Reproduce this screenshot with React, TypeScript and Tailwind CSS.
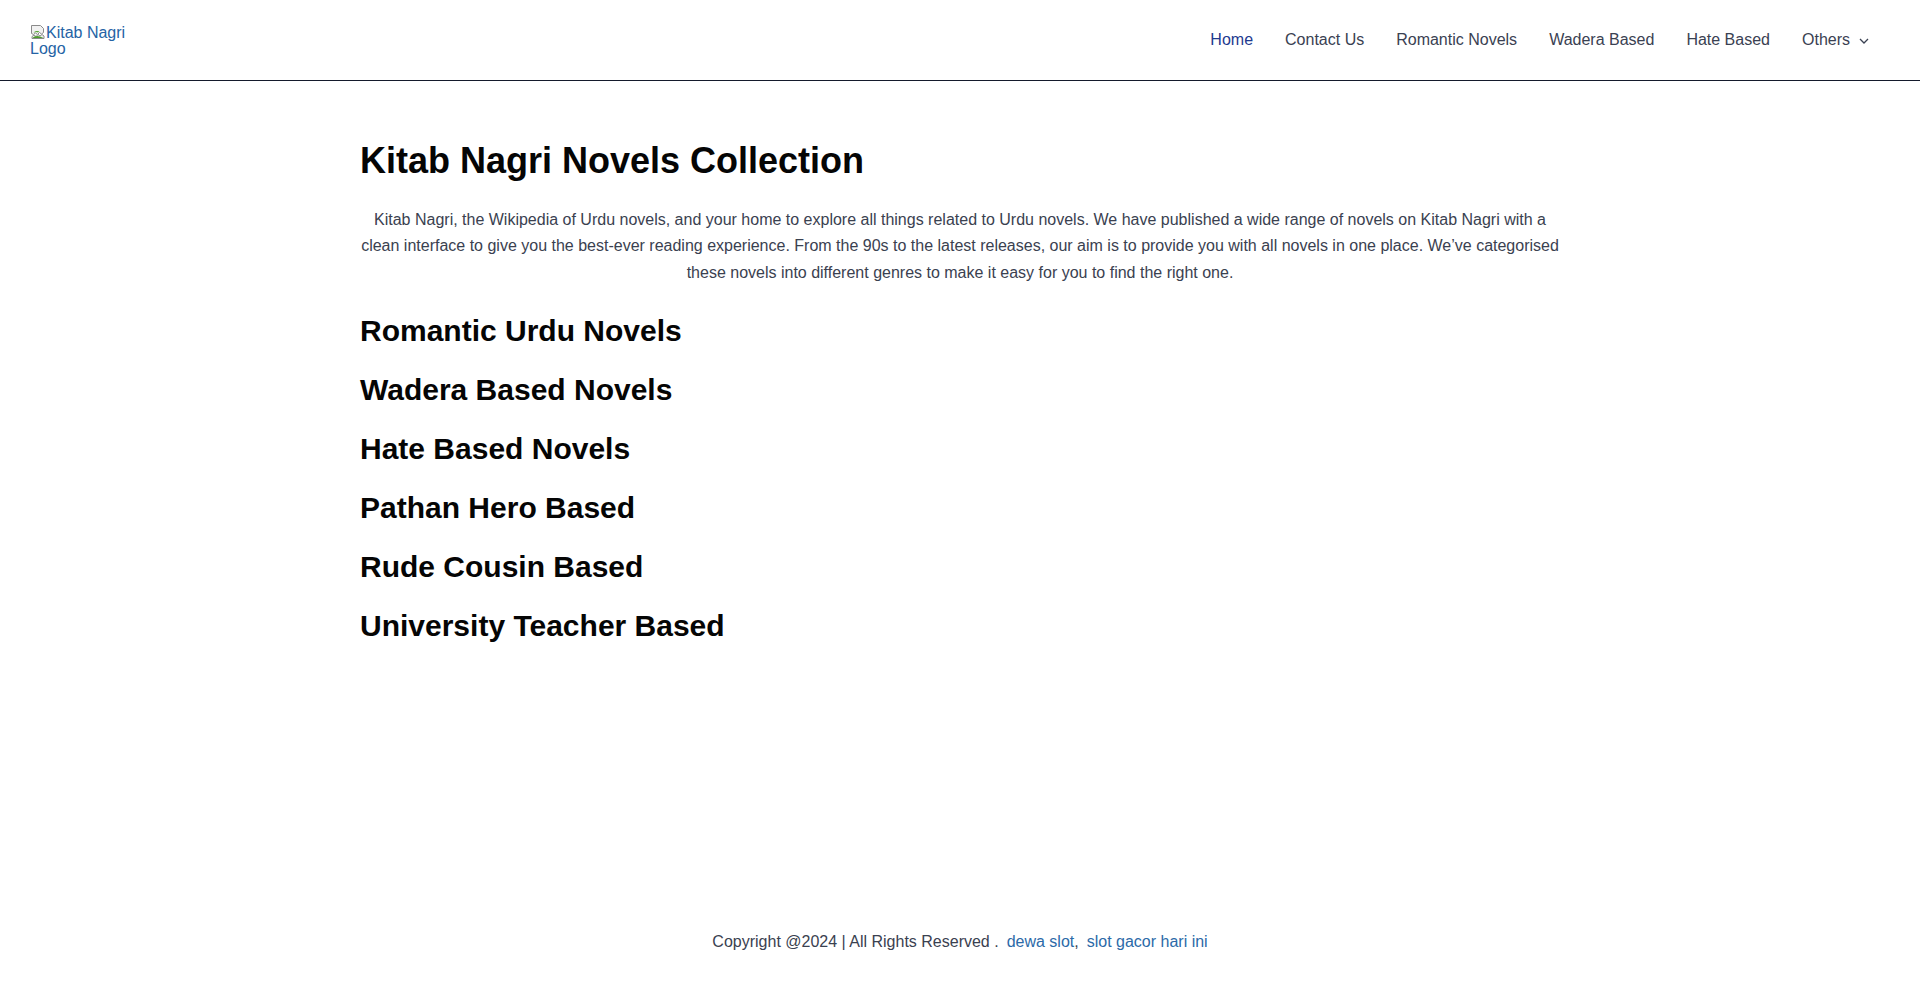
const navLinks = [
  { label: 'Home', active: true },
  { label: 'Contact Us' },
  { label: 'Romantic Novels' },
  { label: 'Wadera Based' },
  { label: 'Hate Based' },
];

const genres = [
  'Romantic Urdu Novels',
  'Wadera Based Novels',
  'Hate Based Novels',
  'Pathan Hero Based',
  'Rude Cousin Based',
  'University Teacher Based',
];

function BrokenImageIcon() {
  return (
    <svg width="16" height="16" viewBox="0 0 16 16" className="inline-block align-[-2px]">
      <path d="M1.5 1.5h9l3 3v4l-2 1.5-2-1.5-2 2-2-1.5-2 1.5-2-1z" fill="#f1f1f1" stroke="#8a8a8a" />
      <path d="M2 12.5l2-1.5 2 1.5 2-2 2 1.5 2-1.5 2 1.5V14.5H2z" fill="#f1f1f1" stroke="#8a8a8a" />
      <path d="M2.5 14c1.5-1.8 4.5-2.8 7.5-1.5l3.5 1.5z" fill="#4e9a2e" />
      <path d="M3.5 8.8c1.2-1.8 3.6-2.4 5.8-1.4L8 8.6 6 7.9z" fill="#5ea83c" />
    </svg>
  );
}

export default function App() {
  return (
    <div className="flex min-h-screen flex-col bg-white font-['Liberation_Sans',Arial,sans-serif]">
      <header className="flex h-[81px] items-center justify-between border-b border-[#141a2c] pl-[30px] pr-[35px]">
        <a href="#" className="block w-[100px] text-base leading-4 text-[#2563a5]">
          <BrokenImageIcon />
          Kitab Nagri Logo
        </a>

        <nav className="flex items-center">
          {navLinks.map((link) => (
            <a
              key={link.label}
              href="#"
              className={`px-4 text-base leading-[26px] ${link.active ? 'text-[#1e3a8f]' : 'text-[#3a4152]'}`}
            >
              {link.label}
            </a>
          ))}
          <a href="#" className="flex items-center px-4 text-base leading-[26px] text-[#3a4152]">
            Others
            <svg width="10" height="6" viewBox="0 0 10 6" className="ml-[9px] mt-[1px]" fill="none">
              <path d="M1 1l4 4 4-4" stroke="#3a4152" strokeWidth="1.3" />
            </svg>
          </a>
        </nav>
      </header>

      <main className="mx-auto w-[1200px] flex-1 pt-[57px]">
        <h1 className="mb-[22px] text-[36px] font-bold leading-[1.3] text-[#050505]">Kitab Nagri Novels Collection</h1>
        <p className="mb-[25px] text-center text-base leading-[26.4px] text-[#3a4150]">
          Kitab Nagri, the Wikipedia of Urdu novels, and your home to explore all things related to Urdu novels. We have
          published a wide range of novels on Kitab Nagri with a clean interface to give you the best-ever reading
          experience. From the 90s to the latest releases, our aim is to provide you with all novels in one place.
          We’ve categorised these novels into different genres to make it easy for you to find the right one.
        </p>

        {genres.map((title) => (
          <h2 key={title} className="mb-5 text-[30px] font-bold leading-[1.3] text-[#050505]">
            {title}
          </h2>
        ))}
      </main>

      <footer className="py-[38px] text-center text-base leading-[26px] text-[#3a4150]">
        Copyright @2024 | All Rights Reserved .
        <a href="#" className="ml-[8px] text-[#2c6aa8]">
          dewa slot
        </a>
        ,
        <a href="#" className="ml-[8px] text-[#2c6aa8]">
          slot gacor hari ini
        </a>
      </footer>
    </div>
  );
}
